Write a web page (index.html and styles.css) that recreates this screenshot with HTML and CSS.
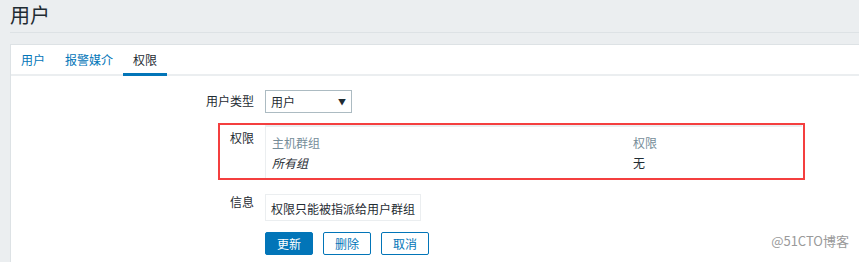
FILE: index.html
```html
<!DOCTYPE html>
<html lang="zh-CN">
<head>
    <meta charset="UTF-8">
    <title>用户</title>
    <link rel="stylesheet" href="styles.css">
</head>
<body>
    <header class="page-header">
        <h1>用户</h1>
    </header>

    <div class="card">
        <ul class="tabs">
            <li><a href="#">用户</a></li>
            <li><a href="#">报警媒介</a></li>
            <li class="active"><a href="#">权限</a></li>
        </ul>

        <form class="form">
            <div class="row">
                <label class="label">用户类型</label>
                <div class="field">
                    <div class="select">
                        <span>用户</span>
                        <span class="arrow">&#9660;</span>
                    </div>
                </div>
            </div>

            <div class="row perm-row">
                <label class="label">权限</label>
                <div class="field">
                    <table class="perm-table">
                        <thead>
                            <tr>
                                <th>主机群组</th>
                                <th class="col-perm">权限</th>
                            </tr>
                        </thead>
                        <tbody>
                            <tr>
                                <td><em>所有组</em></td>
                                <td class="col-perm">无</td>
                            </tr>
                        </tbody>
                    </table>
                </div>
            </div>

            <div class="row info-row">
                <label class="label">信息</label>
                <div class="field">
                    <div class="info-box">权限只能被指派给用户群组</div>
                </div>
            </div>

            <div class="row">
                <div class="label"></div>
                <div class="field buttons">
                    <button type="button" class="btn btn-primary">更新</button>
                    <button type="button" class="btn">删除</button>
                    <button type="button" class="btn">取消</button>
                </div>
            </div>
        </form>
    </div>

    <div class="watermark">@51CTO博客</div>
</body>
</html>
```

FILE: styles.css
```css
body {
    margin: 0;
    background-color: #ebeef0;
    font-family: "Noto Sans CJK SC", "DejaVu Sans", sans-serif;
    font-size: 12px;
    color: #1f2c33;
    height: 262px;
    overflow: hidden;
    position: relative;
}
.page-header {
    margin-left: 10px;
    height: 32px;
    border-bottom: 1px solid #dde2e5;
}
.page-header h1 {
    margin: 0;
    font-size: 20px;
    font-weight: normal;
    line-height: 30px;
    color: #1f2c33;
}
.card {
    margin: 11px 0 0 10px;
    background-color: #ffffff;
    border-top: 1px solid #dde2e5;
    border-left: 1px solid #dde2e5;
    height: 217px;
    overflow: hidden;
}
.tabs {
    list-style: none;
    margin: 0;
    padding: 0;
    display: flex;
    border-bottom: 2px solid #ebeef0;
    height: 29px;
}
.tabs li a {
    display: block;
    padding: 0 10px;
    line-height: 29px;
    height: 29px;
    color: #0275b8;
    text-decoration: none;
}
.tabs li.active a {
    color: #1f2c33;
    border-bottom: 3px solid #0275b8;
    height: 28px;
}
.form {
    padding-top: 14px;
    padding-right: 57px;
}
.row {
    display: flex;
    align-items: flex-start;
}
.label {
    width: 254px;
    flex-shrink: 0;
    text-align: right;
    padding-right: 11px;
    box-sizing: border-box;
    line-height: 22px;
}
.field {
    flex: 1;
}
.select {
    width: 87px;
    height: 23px;
    box-sizing: border-box;
    border: 1px solid #acbbc2;
    display: flex;
    justify-content: space-between;
    align-items: center;
    padding: 0 5px 0 5px;
}
.select .arrow {
    font-size: 8px;
    color: #1f2c33;
}
.perm-row {
    margin-top: 11px;
    position: relative;
    padding-top: 1px;
}
.perm-row::before {
    content: "";
    position: absolute;
    left: 207px;
    right: -3px;
    top: -1px;
    bottom: -2px;
    border: 2px solid #f43f3f;
}
.perm-row .label {
    line-height: 26px;
}
.perm-table {
    width: 100%;
    border-collapse: collapse;
    border-top: 2px solid #ebeef0;
    border-left: 1px solid #ebeef0;
}
.perm-table th {
    font-weight: normal;
    text-align: left;
    color: #768d99;
    padding: 4px 6px 0;
    height: 22px;
}
.perm-table td {
    padding: 0 6px 7px;
    height: 18px;
}
.perm-table .col-perm {
    width: 163px;
}
.info-row {
    margin-top: 16px;
}
.info-row .label {
    line-height: 16px;
}
.info-box {
    display: inline-block;
    height: 27px;
    line-height: 27px;
    box-sizing: border-box;
    padding: 0 5px;
    border: 1px solid #ebeef0;
    font-size: 12px;
}
.buttons {
    display: flex;
    gap: 10px;
    margin-top: 11px;
}
.btn {
    width: 48px;
    height: 23px;
    padding: 0;
    font-family: inherit;
    font-size: 12px;
    color: #0275b8;
    background-color: #ffffff;
    border: 1px solid #0275b8;
    border-radius: 2px;
    cursor: pointer;
}
.btn-primary {
    color: #ffffff;
    background-color: #0275b8;
}
.watermark {
    position: absolute;
    right: 10px;
    bottom: 12px;
    font-size: 13px;
    color: #9a9a9a;
    text-shadow: 0 0 1px #ffffff;
}
```
